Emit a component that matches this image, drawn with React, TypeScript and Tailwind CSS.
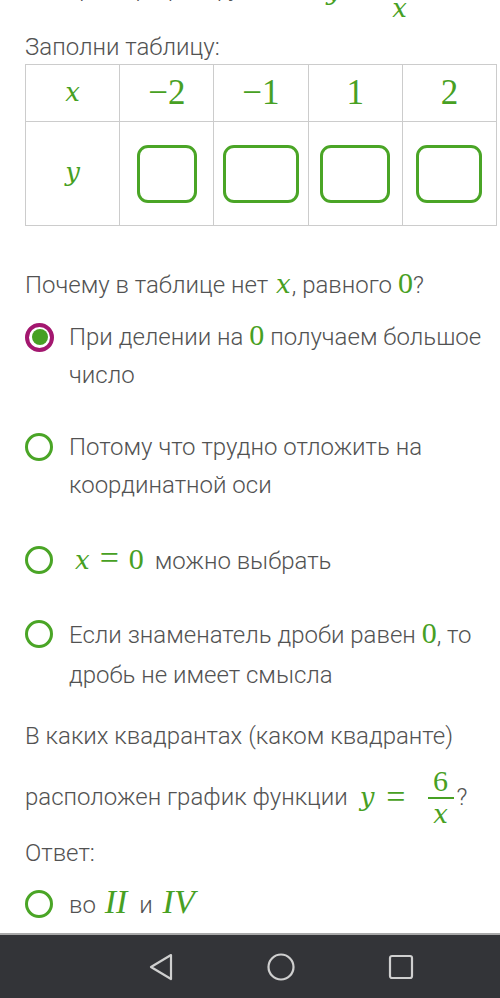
import React from "react";

const GREEN = "text-[#47a023]";
const SERIF = { fontFamily: '"Liberation Serif", "DejaVu Serif", serif' };
const VAR = { fontFamily: '"DejaVu Serif", "Liberation Serif", serif' };

function M({ children, className = "" }: { children: React.ReactNode; className?: string }) {
  return (
    <span className={`${GREEN} text-[30px] leading-none ${className}`} style={SERIF}>
      {children}
    </span>
  );
}

function V({ children, className = "" }: { children: React.ReactNode; className?: string }) {
  return (
    <span className={`${GREEN} italic text-[26px] leading-none ${className}`} style={VAR}>
      {children}
    </span>
  );
}

function Roman({ children, className = "" }: { children: React.ReactNode; className?: string }) {
  return (
    <span className={`${GREEN} italic text-[34px] leading-none ${className}`} style={SERIF}>
      {children}
    </span>
  );
}

function Eq({ className = "" }: { className?: string }) {
  return (
    <span className={`${GREEN} text-[34px] leading-none ${className}`} style={SERIF}>
      =
    </span>
  );
}

function Fraction({ num, den, className = "ml-[22px]" }: { num: string; den: string; className?: string }) {
  return (
    <span className={`mr-[3px] inline-flex flex-col items-center ${className}`}>
      <span className={`${GREEN} text-[30px] leading-[32px]`} style={SERIF}>
        {num}
      </span>
      <span className="h-[2px] w-[26px] bg-[#47a023]" />
      <span className={`${GREEN} italic text-[26px] leading-[30px]`} style={VAR}>
        {den}
      </span>
    </span>
  );
}

function Radio({ selected = false }: { selected?: boolean }) {
  if (selected) {
    return (
      <span className="flex h-[29px] w-[29px] shrink-0 items-center justify-center rounded-full border-[4px] border-[#a3176f] bg-white">
        <span className="h-[16px] w-[16px] rounded-full bg-[#47a023]" />
      </span>
    );
  }
  return <span className="h-[28px] w-[28px] shrink-0 rounded-full border-[3px] border-[#4aa526] bg-white" />;
}

function Option({ selected = false, children, className = "" }: { selected?: boolean; children: React.ReactNode; className?: string }) {
  return (
    <div className={`flex items-start ${className}`}>
      <div className="flex h-[38px] w-[44px] shrink-0 items-center">
        <Radio selected={selected} />
      </div>
      <div className="text-[24px] font-light leading-[38px] text-[#525252]">{children}</div>
    </div>
  );
}

function InputBox({ w }: { w: string }) {
  return <div className={`mx-auto h-[58px] ${w} rounded-[11px] border-[3px] border-[#4aa526]`} />;
}

export default function App() {
  const head = ["−2", "−1", "1", "2"];
  const boxes = ["w-[60px]", "w-[76px]", "w-[70px]", "w-[66px]"];
  return (
    <div
      className="flex h-[998px] w-[500px] flex-col overflow-hidden bg-white"
      style={{ fontFamily: 'Roboto, "Noto Sans", sans-serif' }}
    >
      <div className="flex-1 pl-[25px]">
        {/* previous line, scrolled mostly out of view */}
        <div className="-mt-[48px] flex h-[78px] items-center text-[24px] font-light text-[#525252]">
          <span className="mb-[6px]">Построй график функции,&nbsp;</span>
          <V className="ml-[10px]">y</V>
          <Eq className="ml-[8px]" />
          <Fraction num="6" den="x" className="ml-[18px]" />
        </div>

        <div className="h-[34px] text-[24px] font-light leading-[34px] text-[#525252]">Заполни таблицу:</div>

        <table className="w-[472px] table-fixed border-collapse">
          <tbody>
            <tr className="h-[57px]">
              <td className="border border-[#cccccc] text-center">
                <V>x</V>
              </td>
              {head.map((h) => (
                <td key={h} className="border border-[#cccccc] text-center">
                  <span className={`${GREEN} text-[35px]`} style={SERIF}>
                    {h}
                  </span>
                </td>
              ))}
            </tr>
            <tr className="h-[104px]">
              <td className="border border-[#cccccc] text-center">
                <V>y</V>
              </td>
              {boxes.map((b, i) => (
                <td key={i} className="border border-[#cccccc]">
                  <InputBox w={b} />
                </td>
              ))}
            </tr>
          </tbody>
        </table>

        <div className="mt-[40px] text-[24px] font-light leading-[38px] text-[#525252]">
          Почему в таблице нет <V className="ml-[2px] mr-[1px]">x</V>, равного <M>0</M>?
        </div>

        <Option selected className="mt-[14px]">
          При делении на <M>0</M> получаем большое число
        </Option>
        <Option className="mt-[34px]">Потому что трудно отложить на координатной оси</Option>
        <Option className="mt-[37px]">
          <span className="ml-[6px]" />
          <V>x</V>
          <Eq className="mx-[10px]" />
          <M className="mr-[5px]">0</M> можно выбрать
        </Option>
        <Option className="mt-[35px]">
          <span className="leading-[40px]">
            Если знаменатель дроби равен <M>0</M>, то дробь не имеет смысла
          </span>
        </Option>

        <div className="mt-[22px] text-[24px] font-light leading-[38px] text-[#525252]">
          В каких квадрантах (каком квадранте)
        </div>
        <div className="mt-[5px] flex h-[74px] items-center text-[24px] font-light text-[#525252]">
          <span>расположен график функции&nbsp;</span>
          <V className="ml-[6px]">y</V>
          <Eq className="ml-[12px]" />
          <Fraction num="6" den="x" />
          <span>?</span>
        </div>
        <div className="text-[24px] font-light leading-[38px] text-[#525252]">Ответ:</div>
        <Option className="mt-[13px]">
          во <Roman className="ml-[3px] mr-[6px]">II</Roman> и <Roman className="ml-[4px]">IV</Roman>
        </Option>
      </div>

      {/* system navigation bar */}
      <div className="flex h-[65px] items-center gap-[93px] border-t-[2px] border-[#a9a9a9] bg-[#333438] pl-[148px]">
        <svg width="26" height="28" viewBox="0 0 26 28" fill="none" stroke="#cfcfcf" strokeWidth="2.2" strokeLinejoin="round">
          <path d="M23 2 L3 14 L23 26 Z" />
        </svg>
        <svg width="28" height="28" viewBox="0 0 28 28" fill="none" stroke="#cfcfcf" strokeWidth="2.2">
          <circle cx="14" cy="14" r="12.5" />
        </svg>
        <svg width="26" height="26" viewBox="0 0 26 26" fill="none" stroke="#cfcfcf" strokeWidth="2.2">
          <rect x="2" y="2" width="22" height="22" rx="2" />
        </svg>
      </div>
    </div>
  );
}
